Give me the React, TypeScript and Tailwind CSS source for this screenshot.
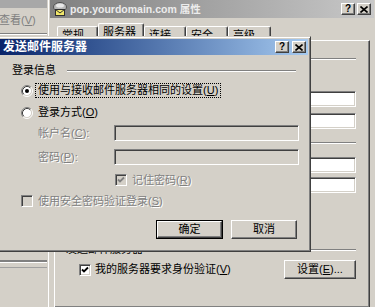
import React from "react";

const font = "font-['Liberation_Sans','Noto_Sans_CJK_SC',sans-serif]";
const raised =
  "border border-t-white border-l-white border-r-[#404040] border-b-[#404040] shadow-[inset_-1px_-1px_0_#808080,inset_1px_1px_0_#d4d0c8]";
const sunken =
  "border border-t-[#808080] border-l-[#808080] border-r-white border-b-white shadow-[inset_1px_1px_0_#404040,inset_-1px_-1px_0_#d4d0c8]";
const disabledText = "text-[#808080] [text-shadow:1px_1px_0_#ffffff]";
const windowFrame =
  "border border-t-[#d4d0c8] border-l-[#d4d0c8] border-r-[#404040] border-b-[#404040] shadow-[inset_1px_1px_0_#ffffff,inset_-1px_-1px_0_#808080] p-[2px]";

function U({ c }: { c: string }) {
  return (
    <>
      (<span className="underline">{c}</span>)
    </>
  );
}

function CaptionBtn({ kind }: { kind: "help" | "close" }) {
  return (
    <div className={`w-[14px] h-[12px] bg-[#d4d0c8] ${raised} flex items-center justify-center`}>
      {kind === "help" ? (
        <span className="text-[10px] font-bold leading-none text-black font-['Liberation_Sans',sans-serif]">?</span>
      ) : (
        <svg width="8" height="7" viewBox="0 0 8 7">
          <path d="M0.5 0.5 L7.5 6.5 M7.5 0.5 L0.5 6.5" stroke="#000" strokeWidth="1.6" />
        </svg>
      )}
    </div>
  );
}

function Radio({ on }: { on?: boolean }) {
  return (
    <svg width="12" height="12" viewBox="0 0 12 12" className="shrink-0">
      <circle cx="6" cy="6" r="4.5" fill="#fff" />
      <path d="M2.11 9.89 A5.5 5.5 0 0 1 9.89 2.11" fill="none" stroke="#808080" />
      <path d="M2.82 9.18 A4.5 4.5 0 0 1 9.18 2.82" fill="none" stroke="#404040" />
      <path d="M9.89 2.11 A5.5 5.5 0 0 1 2.11 9.89" fill="none" stroke="#ffffff" />
      <path d="M9.18 2.82 A4.5 4.5 0 0 1 2.82 9.18" fill="none" stroke="#d4d0c8" />
      {on && <circle cx="6" cy="6" r="2" fill="#000" />}
    </svg>
  );
}

function Check({ checked, disabled }: { checked?: boolean; disabled?: boolean }) {
  return (
    <div
      className={`w-[12px] h-[12px] shrink-0 ${sunken} ${disabled ? "bg-[#d4d0c8]" : "bg-white"} flex items-center justify-center`}
    >
      {checked && (
        <svg width="8" height="8" viewBox="0 0 8 8">
          <path d="M1 3.5 L3 5.5 L7 1.5" fill="none" stroke={disabled ? "#808080" : "#000"} strokeWidth="1.8" />
        </svg>
      )}
    </div>
  );
}

function Etched({ className = "" }: { className?: string }) {
  return <div className={`h-[2px] border-t border-t-[#808080] border-b border-b-white ${className}`} />;
}

function Tab({ w, label, selected }: { w: string; label: string; selected?: boolean }) {
  return (
    <div
      className={`${w} ${selected ? "h-[18px] -mb-[1px] z-10 bg-[#d4d0c8]" : "h-[14px]"} relative rounded-t-[2px] border-t border-l border-r border-t-white border-l-white border-r-[#404040] shadow-[inset_-1px_0_0_#808080] pl-[4px] pt-[2px] leading-[13px] text-black`}
    >
      {label}
    </div>
  );
}

function MailIcon() {
  return (
    <svg width="16" height="16" viewBox="0 0 16 16" className="shrink-0">
      <ellipse cx="8" cy="6" rx="6.5" ry="4.5" fill="#b8b8b8" stroke="#505050" />
      <ellipse cx="8" cy="4.5" rx="4" ry="2" fill="#e8e8e8" />
      <rect x="3.5" y="8.5" width="9" height="6" fill="#f2e86a" stroke="#303030" />
      <path d="M3.5 8.5 L8 12 L12.5 8.5" fill="none" stroke="#303030" />
    </svg>
  );
}

export default function App() {
  return (
    <div className={`relative w-[375px] h-[307px] overflow-hidden bg-[#d4d0c8] text-[11px] leading-[13px] text-black ${font}`}>
      {/* background left window */}
      <div className="absolute left-0 top-0 w-[47px] h-full flex flex-col">
        <div className="h-[8px] bg-[#a8a8a8]" />
        <div className="h-[25px] flex items-center -ml-[1px] text-[#808080]">
          查看<U c="V" />
        </div>
        <div className="h-[1px] bg-[#808080]" />
        <div className="h-[1px] bg-white" />
        <div className="h-[225px]" />
        <div className="h-[2px] bg-[#808080]" />
        <div className="h-[1px] bg-white" />
        <div className="h-[4px]" />
        <div className="h-[1px] bg-[#a0a0a0]" />
      </div>

      {/* properties window */}
      <div className={`absolute left-[47px] top-[-3px] w-[330px] h-[314px] bg-[#d4d0c8] ${windowFrame} flex flex-col`}>
        <div className="h-[18px] shrink-0 bg-linear-to-r from-[#808080] to-[#c8c8c8] flex items-center pl-[2px] pr-[3px]">
          <MailIcon />
          <span className="ml-[2px] font-bold text-[#ececec] text-[10.5px] leading-none">pop.yourdomain.com 属性</span>
          <div className="flex-1" />
          <div className="flex gap-[2px]">
            <CaptionBtn kind="help" />
            <CaptionBtn kind="close" />
          </div>
        </div>
        <div className="h-[22px] shrink-0 flex items-end pl-[7px]">
          <Tab w="w-[41px]" label="常规" />
          <Tab w="w-[46px]" label="服务器" selected />
          <Tab w="w-[42px]" label="连接" />
          <Tab w="w-[42px]" label="安全" />
          <Tab w="w-[43px]" label="高级" />
        </div>
        <div className="mx-[4px] flex-1 border border-t-white border-l-white border-r-[#404040] border-b-[#404040] shadow-[inset_-1px_-1px_0_#808080] flex flex-col pl-[12px] pr-[13px]">
          <Etched className="mt-[17px]" />
          <div className={`mt-[31px] h-[16px] bg-white ${sunken}`} />
          <div className={`mt-[6px] h-[16px] bg-white ${sunken}`} />
          <Etched className="mt-[13px]" />
          <div className={`mt-[13px] h-[16px] bg-white ${sunken}`} />
          <div className={`mt-[4px] h-[16px] bg-white ${sunken}`} />
          <div className="mt-[50px] h-[13px] flex items-center">
            <span className="-ml-[1px]">发送邮件服务器</span>
            <Etched className="flex-1 ml-[4px]" />
          </div>
          <div className="mt-[4px] h-[19px] flex items-center">
            <div className="ml-[12px] flex items-center">
              <Check checked />
              <span className="ml-[4px]">
                我的服务器要求身份验证<U c="V" />
              </span>
            </div>
            <div className="flex-1" />
            <div className={`w-[72px] h-[19px] ${raised} flex items-center justify-center`}>
              设置<U c="E" />...
            </div>
          </div>
        </div>
      </div>

      {/* foreground dialog */}
      <div className={`absolute left-[-3px] top-[36px] w-[314px] h-[216px] z-20 bg-[#d4d0c8] ${windowFrame} flex flex-col`}>
        <div className="h-[16px] shrink-0 bg-linear-to-r from-[#0a246a] to-[#a6caf0] flex items-center pl-[3px] pr-[2px]">
          <span className="font-bold text-white text-[12px] leading-none">发送邮件服务器</span>
          <div className="flex-1" />
          <div className="flex gap-[3px]">
            <CaptionBtn kind="help" />
            <CaptionBtn kind="close" />
          </div>
        </div>
        <div className="flex flex-col">
          <div className="mt-[9px] h-[13px] flex items-center pl-[12px] pr-[12px]">
            <span>登录信息</span>
            <Etched className="flex-1 ml-[11px]" />
          </div>
          <div className="mt-[6px] h-[15px] flex items-center pl-[21px]">
            <Radio on />
            <span className="ml-[2px] border border-dotted border-black px-[2px] leading-[13px]">
              使用与接收邮件服务器相同的设置<U c="U" />
            </span>
          </div>
          <div className="mt-[7px] h-[15px] flex items-center pl-[21px]">
            <Radio />
            <span className="ml-[2px] border border-transparent px-[2px] leading-[13px]">
              登录方式<U c="O" />
            </span>
          </div>
          <div className="mt-[5px] h-[16px] flex items-center pl-[38px]">
            <span className={`w-[76px] ${disabledText}`}>
              帐户名<U c="C" />:
            </span>
            <div className={`w-[185px] h-full bg-[#d4d0c8] ${sunken}`} />
          </div>
          <div className="mt-[8px] h-[16px] flex items-center pl-[38px]">
            <span className={`w-[76px] ${disabledText}`}>
              密码<U c="P" />:
            </span>
            <div className={`w-[185px] h-full bg-[#d4d0c8] ${sunken}`} />
          </div>
          <div className="mt-[9px] h-[12px] flex items-center pl-[115px]">
            <Check checked disabled />
            <span className={`ml-[5px] ${disabledText}`}>
              记住密码<U c="R" />
            </span>
          </div>
          <div className="mt-[9px] h-[12px] flex items-center pl-[21px]">
            <Check disabled />
            <span className={`ml-[5px] ${disabledText}`}>
              使用安全密码验证登录<U c="S" />
            </span>
          </div>
          <div className="mt-[13px] h-[19px] flex justify-end gap-[8px] pr-[11px]">
            <div className="w-[67px] h-[19px] border border-black">
              <div className={`w-full h-full ${raised} flex items-center justify-center`}>确定</div>
            </div>
            <div className={`w-[66px] h-[19px] ${raised} flex items-center justify-center`}>取消</div>
          </div>
        </div>
      </div>
    </div>
  );
}
